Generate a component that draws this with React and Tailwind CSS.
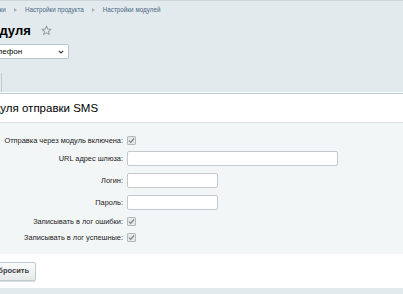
import React from "react";

const ROWS = [
  { label: "Отправка через модуль включена:", type: "check", extra: "-mb-[1px]" },
  { label: "URL адрес шлюза:", type: "text", w: "w-[211px]" },
  { label: "Логин:", type: "text", w: "w-[91px]" },
  { label: "Пароль:", type: "text", w: "w-[91px]" },
  { label: "Записывать в лог ошибки:", type: "check" },
  { label: "Записывать в лог успешные:", type: "check" },
];

function Check() {
  return (
    <span className="flex w-[9px] h-[9px] items-center justify-center rounded-[1px] border border-[#b5bcc0] bg-[#e4e8ea]">
      <svg width="7" height="7" viewBox="0 0 7 7">
        <path d="M1 3.6 L2.8 5.3 L6 1.5" fill="none" stroke="#7d868b" strokeWidth="1.2" />
      </svg>
    </span>
  );
}

function Arrow() {
  return (
    <svg width="3" height="4" viewBox="0 0 3 4">
      <path d="M0 0 L3 2 L0 4 Z" fill="#a3b0ba" />
    </svg>
  );
}

export default function App() {
  return (
    <div className="w-[403px] h-[294px] overflow-hidden bg-[#e3eaed] font-['Liberation_Sans',Arial,sans-serif] border-t border-[#cdd6da]">
      <div className="h-[18px] flex items-center text-[6.3px] text-[#4a6885] whitespace-nowrap">
        <div className="flex items-center gap-[8px] -ml-[25px]">
          <span>Настройки</span>
          <Arrow />
          <span>Настройки продукта</span>
          <Arrow />
          <span>Настройки модулей</span>
        </div>
      </div>
      <div className="h-[23px] flex items-center whitespace-nowrap">
        <h1 className="text-[13px] font-bold text-[#000] -ml-[90px]">Настройки модуля</h1>
        <svg className="ml-[10px]" width="11" height="11" viewBox="0 0 24 24">
          <path
            d="M12 2.5l2.9 6.2 6.6.7-5 4.5 1.4 6.6L12 17.2l-5.9 3.3 1.4-6.6-5-4.5 6.6-.7z"
            fill="none"
            stroke="#8f9aa1"
            strokeWidth="2.2"
            strokeLinejoin="round"
          />
        </svg>
      </div>
      <div className="h-[24px] flex items-start pt-[2px]">
        <div className="w-[69px] h-[15px] bg-white border border-[#bcc5ca] rounded-r-[2px] border-l-0 flex items-center justify-between pr-[4px] text-[8px] text-[#000] overflow-hidden">
          <span className="-ml-[11px]">Телефон</span>
          <svg width="6" height="4" viewBox="0 0 6 4">
            <path d="M0.8 0.8 L3 3 L5.2 0.8" fill="none" stroke="#333" strokeWidth="1.1" />
          </svg>
        </div>
      </div>
      <div className="h-[26px] flex">
        <div className="w-[2px] mt-[7px] border-r border-[#c4ccd0]" />
      </div>
      <div className="h-px bg-[#f7fafb]" />
      <div className="bg-white border-t border-[#c6ced2]">
        <div className="h-[29px] pt-[2px] flex items-center border-b border-[#dadfe1] whitespace-nowrap">
          <span className="text-[11.5px] text-[#000] -ml-[80px]">Настройки модуля отправки SMS</span>
        </div>
        <div className="bg-[#f2f6f7] pt-[13px] pb-[12px] flex flex-col gap-[7px]">
          {ROWS.map((r) => (
            <div key={r.label} className={`flex items-center gap-[4px] ${r.extra || ""}`}>
              <div className="w-[123px] text-right text-[7.4px] leading-none text-[#1c1c1c] whitespace-nowrap">{r.label}</div>
              {r.type === "check" ? (
                <Check />
              ) : (
                <div className={`${r.w} h-[15px] bg-white border border-[#c3c9cd] rounded-[2px]`} />
              )}
            </div>
          ))}
        </div>
        <div className="h-[34px] flex items-center">
          <button className="h-[19px] px-[6px] -ml-[14px] flex items-center bg-gradient-to-b from-[#fbfcfc] to-[#e6eaeb] border border-[#c4cbcf] rounded-[2px] shadow-[0_1px_1px_rgba(0,0,0,0.15)] text-[7.5px] font-bold text-[#3a3a3a]">
            Сбросить
          </button>
        </div>
      </div>
    </div>
  );
}
